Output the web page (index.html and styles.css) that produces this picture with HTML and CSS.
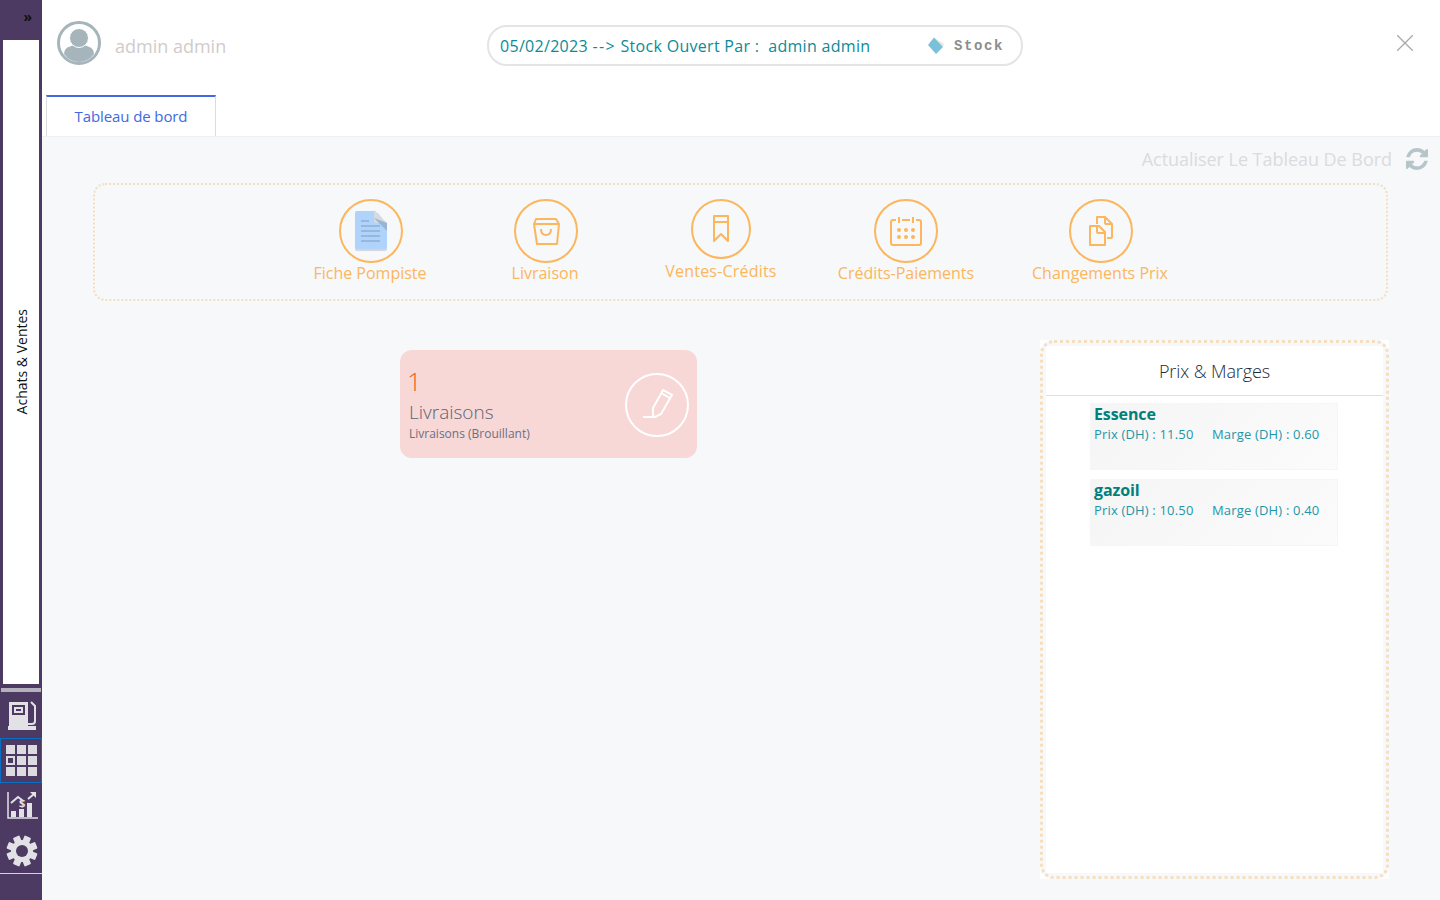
FILE: index.html
```html
<!DOCTYPE html>
<html lang="fr">
    <head>
        <meta charset="UTF-8" />
        <title>Tableau de bord</title>
        <link rel="stylesheet" href="styles.css">
    </head>
    <body>
        <!-- barre laterale -->
        <aside class="sidebar">
            <div class="sidebar-toggle">»</div>
            <div class="sidebar-panel"><span class="sidebar-label">Achats &amp; Ventes</span></div>
            <div class="sidebar-rule"></div>
            <div class="side-btn">
                <svg width="32" height="32" viewBox="0 0 32 32">
                    <path fill="#e2e2e6" d="M3 2h19v24H3zM2 26h28v4H2z"/>
                    <rect x="6" y="5" width="13" height="10" fill="#4d3a63"/>
                    <rect x="8" y="7" width="9" height="6" fill="#e2e2e6"/>
                    <rect x="10" y="9" width="5" height="2" fill="#4d3a63"/>
                    <path fill="none" stroke="#e2e2e6" stroke-width="2" d="M25 2l4 4v15q0 3-3 3h-4"/>
                </svg>
            </div>
            <div class="side-btn side-btn-active">
                <div class="apps-grid">
                    <i></i><i></i><i></i>
                    <i class="apps-current"></i><i></i><i></i>
                    <i></i><i></i><i></i>
                </div>
            </div>
            <div class="side-btn">
                <svg width="32" height="32" viewBox="0 0 32 32">
                    <path fill="none" stroke="#e2e2e6" stroke-width="1.500" d="M2 2v26h30"/>
                    <rect x="5" y="21" width="5" height="6" fill="#e2e2e6"/>
                    <rect x="13" y="19" width="5" height="8" fill="#e2e2e6"/>
                    <rect x="21" y="13" width="5" height="14" fill="#e2e2e6"/>
                    <path fill="none" stroke="#e2e2e6" stroke-width="2" d="M5 13l7-6 4 3M22 9l6-5"/>
                    <path fill="#e2e2e6" d="M24 2h6v6z"/>
                    <text x="13" y="17" class="side-dollar">$</text>
                </svg>
            </div>
            <div class="side-btn">
                <svg width="32" height="32" viewBox="0 0 32 32">
                    <g fill="#e2e2e6">
                        <rect x="12.500" y="0.500" width="7" height="31" rx="1" transform="rotate(22.500 16 16)"/>
                        <rect x="12.500" y="0.500" width="7" height="31" rx="1" transform="rotate(67.500 16 16)"/>
                        <rect x="12.500" y="0.500" width="7" height="31" rx="1" transform="rotate(112.500 16 16)"/>
                        <rect x="12.500" y="0.500" width="7" height="31" rx="1" transform="rotate(157.500 16 16)"/>
                    </g>
                    <circle cx="16" cy="16" r="8.500" fill="none" stroke="#e2e2e6" stroke-width="5"/>
                    <circle cx="16" cy="16" r="6" fill="#4d3a63"/>
                </svg>
            </div>
            <div class="sidebar-rule-bottom"></div>
        </aside>

        <main class="main">
            <!-- entete -->
            <header class="top">
                <div class="top-row">
                    <div class="user">
                        <svg width="44" height="44" viewBox="0 0 44 44">
                            <circle cx="22" cy="22" r="20.500" fill="none" stroke="#a5b5bb" stroke-width="3"/>
                            <path fill="#a5b5bb" d="M7 33q0-6 6-7.500 4-1.500 5-1.500h8q1 0 5 1.500 6 1.500 6 7.500-6 8-15 8T7 33z"/>
                            <circle cx="22" cy="17" r="9.500" fill="#a5b5bb" stroke="#fff" stroke-width="1"/>
                        </svg>
                        <span class="user-name">admin admin</span>
                    </div>
                    <div class="stock-pill">
                        <span class="stock-text">05/02/2023 <span class="stock-arrow">--&gt;</span> Stock Ouvert Par :&nbsp; admin admin</span>
                        <svg class="stock-icon" width="18" height="18" viewBox="0 0 18 18">
                            <path fill="#f0e6d6" d="M7 .5L17 7l-1 3z"/>
                            <path fill="#79c0d8" d="M1 8l6-7.500L16 10l-7 7z"/>
                        </svg>
                        <span class="stock-label">Stock</span>
                    </div>
                    <svg class="close-icon" width="16" height="16" viewBox="0 0 16 16">
                        <path fill="none" stroke="#a9a9a9" stroke-width="1.300" d="M0 0l16 16M16 0L0 16"/>
                    </svg>
                </div>
                <div class="tabs">
                    <div class="tab">Tableau de bord</div>
                </div>
            </header>

            <section class="content">
                <div class="refresh">
                    <span>Actualiser Le Tableau De Bord</span>
                    <svg width="22" height="22" viewBox="0 0 1536 1536">
                        <path fill="#b5c5ca" d="M1511 928q0 5-1 7-64 268-268 434.500T764 1536q-146 0-282.500-55T238 1324l-129 129q-19 19-45 19t-45-19-19-45V960q0-26 19-45t45-19h448q26 0 45 19t19 45-19 45l-137 137q71 66 161 102t187 36q134 0 250-65t186-179q11-17 53-117 8-23 30-23h192q13 0 22.500 9.500T1511 928zm25-800v448q0 26-19 45t-45 19h-448q-26 0-45-19t-19-45 19-45l138-138q-148-137-349-137-134 0-250 65T332 500q-11 17-53 117-8 23-30 23H50q-13 0-22.500-9.500T18 608v-7q65-268 270-434.500T768 0q146 0 284 55.500T1297 212l130-129q19-19 45-19t45 19 19 45z"/>
                    </svg>
                </div>

                <!-- raccourcis -->
                <div class="shortcuts">
                    <div class="shortcut shortcut-fiche">
                        <div class="shortcut-circle">
                            <svg width="34" height="42" viewBox="0 0 34 42">
                                <path fill="#d4d6da" d="M2 3h22l9 12v24q0 2-2 2H3q-2 0-2-2V5z"/>
                                <path fill="#b0d3fb" d="M3 1h18l12 13v23q0 2-2 2H3q-2 0-2-2V3q0-2 2-2z"/>
                                <path fill="#d6dbe0" d="M20 0l13 13H22q-2 0-2-2z"/>
                                <path fill="#9ab4d2" d="M20 8l13 5v8z"/>
                                <path stroke="#8fb0d4" stroke-width="1.500" d="M7 11h8M7 16h19M7 21h19M7 26h19M7 31h19"/>
                            </svg>
                        </div>
                        <span>Fiche Pompiste</span>
                    </div>
                    <div class="shortcut shortcut-livraison">
                        <div class="shortcut-circle">
                            <svg width="30" height="30" viewBox="0 0 30 30" class="line-icon">
                                <path d="M5 3h20l3 5-2 20H6L3 8zM3 8h24"/>
                                <path d="M10 13q0 6 5 6t5-6"/>
                            </svg>
                        </div>
                        <span>Livraison</span>
                    </div>
                    <div class="shortcut shortcut-ventes">
                        <div class="shortcut-circle shortcut-circle-small">
                            <svg width="18" height="28" viewBox="0 0 18 28" class="line-icon">
                                <path d="M2 1h14v25l-7-7-7 7zM2 7h14"/>
                            </svg>
                        </div>
                        <span>Ventes-Crédits</span>
                    </div>
                    <div class="shortcut shortcut-credits">
                        <div class="shortcut-circle">
                            <svg width="32" height="30" viewBox="0 0 32 30" class="line-icon">
                                <path d="M6 4H3Q1 4 1 6v21q0 2 2 2h26q2 0 2-2V6q0-2-2-2h-3M12 4h8M9 1v6M23 1v6"/>
                                <g fill="#fbb65e" stroke="none">
                                    <circle cx="9" cy="14" r="2"/><circle cx="16" cy="14" r="2"/><circle cx="23" cy="14" r="2"/>
                                    <circle cx="9" cy="21" r="2"/><circle cx="16" cy="21" r="2"/><circle cx="23" cy="21" r="2"/>
                                </g>
                            </svg>
                        </div>
                        <span>Crédits-Paiements</span>
                    </div>
                    <div class="shortcut shortcut-prix">
                        <div class="shortcut-circle">
                            <svg width="24" height="30" viewBox="0 0 24 30" class="line-icon">
                                <path d="M8 8V1h8l7 7v13q0 1-1 1h-4"/>
                                <path d="M16 1v6q0 1 1 1h6"/>
                                <path d="M1 10h9l6 6v13H1z"/>
                                <path d="M8 10v6q0 1 1 1h7"/>
                            </svg>
                        </div>
                        <span>Changements Prix</span>
                    </div>
                </div>

                <div class="lower">
                    <!-- carte brouillon -->
                    <div class="draft-card">
                        <div class="draft-text">
                            <div class="draft-count">1</div>
                            <div class="draft-title">Livraisons</div>
                            <div class="draft-sub">Livraisons (Brouillant)</div>
                        </div>
                        <div class="draft-circle">
                            <svg width="36" height="34" viewBox="0 0 36 34">
                                <path fill="none" stroke="#fff" stroke-width="2" d="M4 29h12l6-3 11-19-9-5-10 18v9M22 5l9 5"/>
                            </svg>
                        </div>
                    </div>

                    <!-- prix et marges -->
                    <div class="prices">
                        <div class="prices-frame">
                            <div class="prices-body">
                                <h2 class="prices-title">Prix &amp; Marges</h2>
                                <div class="price-list">
                                    <div class="price-item">
                                        <div class="price-name">Essence</div>
                                        <div class="price-values"><span>Prix (DH) : 11.50</span><span>Marge (DH) : 0.60</span></div>
                                    </div>
                                    <div class="price-item">
                                        <div class="price-name">gazoil</div>
                                        <div class="price-values"><span>Prix (DH) : 10.50</span><span>Marge (DH) : 0.40</span></div>
                                    </div>
                                </div>
                            </div>
                        </div>
                    </div>
                </div>
            </section>
        </main>
    </body>
</html>
```

FILE: styles.css
```css
:root {
    --purple: #4d3a63;
    --orange: #fbb65e;
    --dots: #f5dfc0;
    --teal: #0b8b98;
    --page: #f6f8fa;
}

* {
    margin: 0;
    padding: 0;
    box-sizing: border-box;
}

html,
body {
    height: 900px;
    overflow: hidden;
}

body {
    display: flex;
    font-family: "Open Sans", "Noto Sans", sans-serif;
    background: #fff;
}

/* barre laterale */
.sidebar {
    width: 42px;
    height: 900px;
    flex: none;
    background: var(--purple);
    display: flex;
    flex-direction: column;
}

.sidebar-toggle {
    height: 40px;
    padding: 5px 10px 0 0;
    text-align: right;
    font-size: 14px;
    font-weight: 700;
    line-height: 24px;
    color: #111;
}

.sidebar-panel {
    width: 36px;
    height: 644px;
    margin-left: 3px;
    background: #fff;
    display: flex;
    align-items: center;
    justify-content: center;
}

.sidebar-label {
    writing-mode: vertical-rl;
    transform: rotate(180deg);
    font-size: 14px;
    color: #111;
}

.sidebar-rule {
    height: 4px;
    margin: 4px 1px 1px;
    background: #b5b0bd;
}

.side-btn {
    height: 45px;
    padding-left: 2px;
    display: flex;
    align-items: center;
    justify-content: center;
}

.side-btn-active {
    padding-left: 1px;
    border: 1px solid #0a6fc2;
}

.side-dollar {
    font-size: 11px;
    font-weight: 700;
    fill: #e2e2e6;
}

.apps-grid {
    display: grid;
    grid-template-columns: repeat(3, 9px);
    grid-auto-rows: 9px;
    gap: 2px;
}

.apps-grid i {
    background: #dcdce0;
}

.apps-grid .apps-current {
    background: var(--purple);
    border: 2px solid #dcdce0;
}

.sidebar-rule-bottom {
    height: 1px;
    background: #d5d2da;
}

.main {
    flex: 1;
    min-width: 0;
    display: flex;
    flex-direction: column;
}

/* entete */
.top {
    height: 137px;
    flex: none;
    background: #fff;
    border-bottom: 1px solid #eef0f2;
    display: flex;
    flex-direction: column;
}

.top-row {
    height: 95px;
    display: flex;
    align-items: flex-start;
}

.user {
    width: 445px;
    padding: 21px 0 0 15px;
    display: flex;
    align-items: center;
    gap: 14px;
}

.user-name {
    font-size: 18px;
    color: #cfcccc;
    margin-top: 5px;
}

.stock-pill {
    width: 536px;
    height: 41px;
    margin-top: 25px;
    padding: 0 17px 0 11px;
    border: 2px solid #e6e3e6;
    border-radius: 20px;
    display: flex;
    align-items: center;
}

.stock-text {
    width: 427px;
    font-size: 16px;
    letter-spacing: 0.3px;
    color: var(--teal);
    white-space: nowrap;
}

.stock-arrow {
    letter-spacing: 1.4px;
}

.stock-icon {
    flex: none;
}

.stock-label {
    margin-left: 9px;
    font-family: "Liberation Mono", monospace;
    font-size: 14px;
    font-weight: 700;
    letter-spacing: 1.6px;
    color: #8d8d8d;
}

.close-icon {
    margin: 35px 0 0 374px;
}

.tabs {
    padding-left: 4px;
    display: flex;
}

.tab {
    width: 170px;
    height: 41px;
    border: 1px solid #dcdcdc;
    border-top: 2px solid #4169e1;
    border-bottom: none;
    background: #fff;
    text-align: center;
    font-size: 15px;
    letter-spacing: -0.1px;
    line-height: 39px;
    color: #4169e1;
}

/* contenu */
.content {
    flex: 1;
    background: var(--page);
    padding: 9px 11px 0 51px;
}

.refresh {
    height: 26px;
    margin-right: 1px;
    display: flex;
    justify-content: flex-end;
    align-items: center;
    gap: 14px;
    font-size: 18px;
    letter-spacing: -0.04px;
    color: #dadcde;
}

/* raccourcis */
.shortcuts {
    height: 118px;
    margin-top: 11px;
    margin-right: 41px;
    border: 2px dotted var(--dots);
    border-radius: 12px;
    position: relative;
}

/* noeuds places a leur centre dans le cadre */
.shortcut {
    position: absolute;
    top: 14px;
    width: 200px;
    display: flex;
    flex-direction: column;
    align-items: center;
    font-size: 16px;
    line-height: 20px;
    color: var(--orange);
}

.shortcut-fiche { left: 175px; }
.shortcut-livraison { left: 350px; }
.shortcut-ventes { left: 526px; letter-spacing: 0.2px; }
.shortcut-credits { left: 711px; }
.shortcut-prix { left: 905px; }

.shortcut-circle {
    width: 64px;
    height: 64px;
    margin-left: 2px;
    border: 2px solid var(--orange);
    border-radius: 50%;
    display: flex;
    align-items: center;
    justify-content: center;
}

.shortcut-circle-small {
    width: 60px;
    height: 60px;
    margin: 0 0 2px;
}

.shortcut-credits .shortcut-circle {
    margin-left: 0;
}

.line-icon {
    fill: none;
    stroke: var(--orange);
    stroke-width: 2;
    stroke-linejoin: round;
}

.lower {
    display: flex;
    align-items: flex-start;
    margin-top: 39px;
}

/* carte brouillon */
.draft-card {
    width: 297px;
    height: 108px;
    margin: 10px 343px 0 307px;
    padding: 0 8px 0 9px;
    background: #f8d7d7;
    border-radius: 12px;
    display: flex;
    align-items: center;
    justify-content: space-between;
}

.draft-text {
    padding-top: 5px;
}

.draft-count {
    font-size: 26px;
    line-height: 34px;
    font-weight: 300;
    margin-left: -2px;
    color: #f0622a;
}

.draft-title {
    font-size: 19px;
    line-height: 28px;
    font-weight: 300;
    color: #5b6372;
}

.draft-sub {
    font-size: 12px;
    line-height: 16px;
    color: #6b7080;
    padding-bottom: 8px;
}

.draft-circle {
    width: 64px;
    height: 64px;
    margin-top: 2px;
    border: 2px solid #fff;
    border-radius: 50%;
    display: flex;
    align-items: center;
    justify-content: center;
}

/* prix et marges */
.prices {
    width: 349px;
    height: 539px;
    flex: none;
    background: #fff;
}

.prices-frame {
    height: 100%;
    background: var(--page);
    border: 3px dotted var(--dots);
    border-radius: 14px;
    padding: 3px;
}

.prices-body {
    height: 100%;
    background: #fff;
}

.prices-title {
    height: 50px;
    border-bottom: 1px solid #f3dcc6;
    text-align: center;
    font-size: 18px;
    font-weight: 300;
    letter-spacing: -0.1px;
    line-height: 50px;
    color: #222b36;
}

.price-list {
    padding: 7px 0 0 44px;
    display: flex;
    flex-direction: column;
    gap: 9px;
}

.price-item {
    width: 248px;
    height: 67px;
    padding-left: 3px;
    background: linear-gradient(135deg, #f5f5f6, #fbfbfc);
    border: 1px solid #f6f6f7;
}

.price-name {
    font-size: 16px;
    font-weight: 700;
    letter-spacing: -0.1px;
    line-height: 20px;
    color: #00807c;
}

.price-values {
    display: flex;
    font-size: 13px;
    letter-spacing: 0.17px;
    line-height: 20px;
    color: #1b97a8;
}

.price-values span:first-child {
    width: 118px;
}
```
